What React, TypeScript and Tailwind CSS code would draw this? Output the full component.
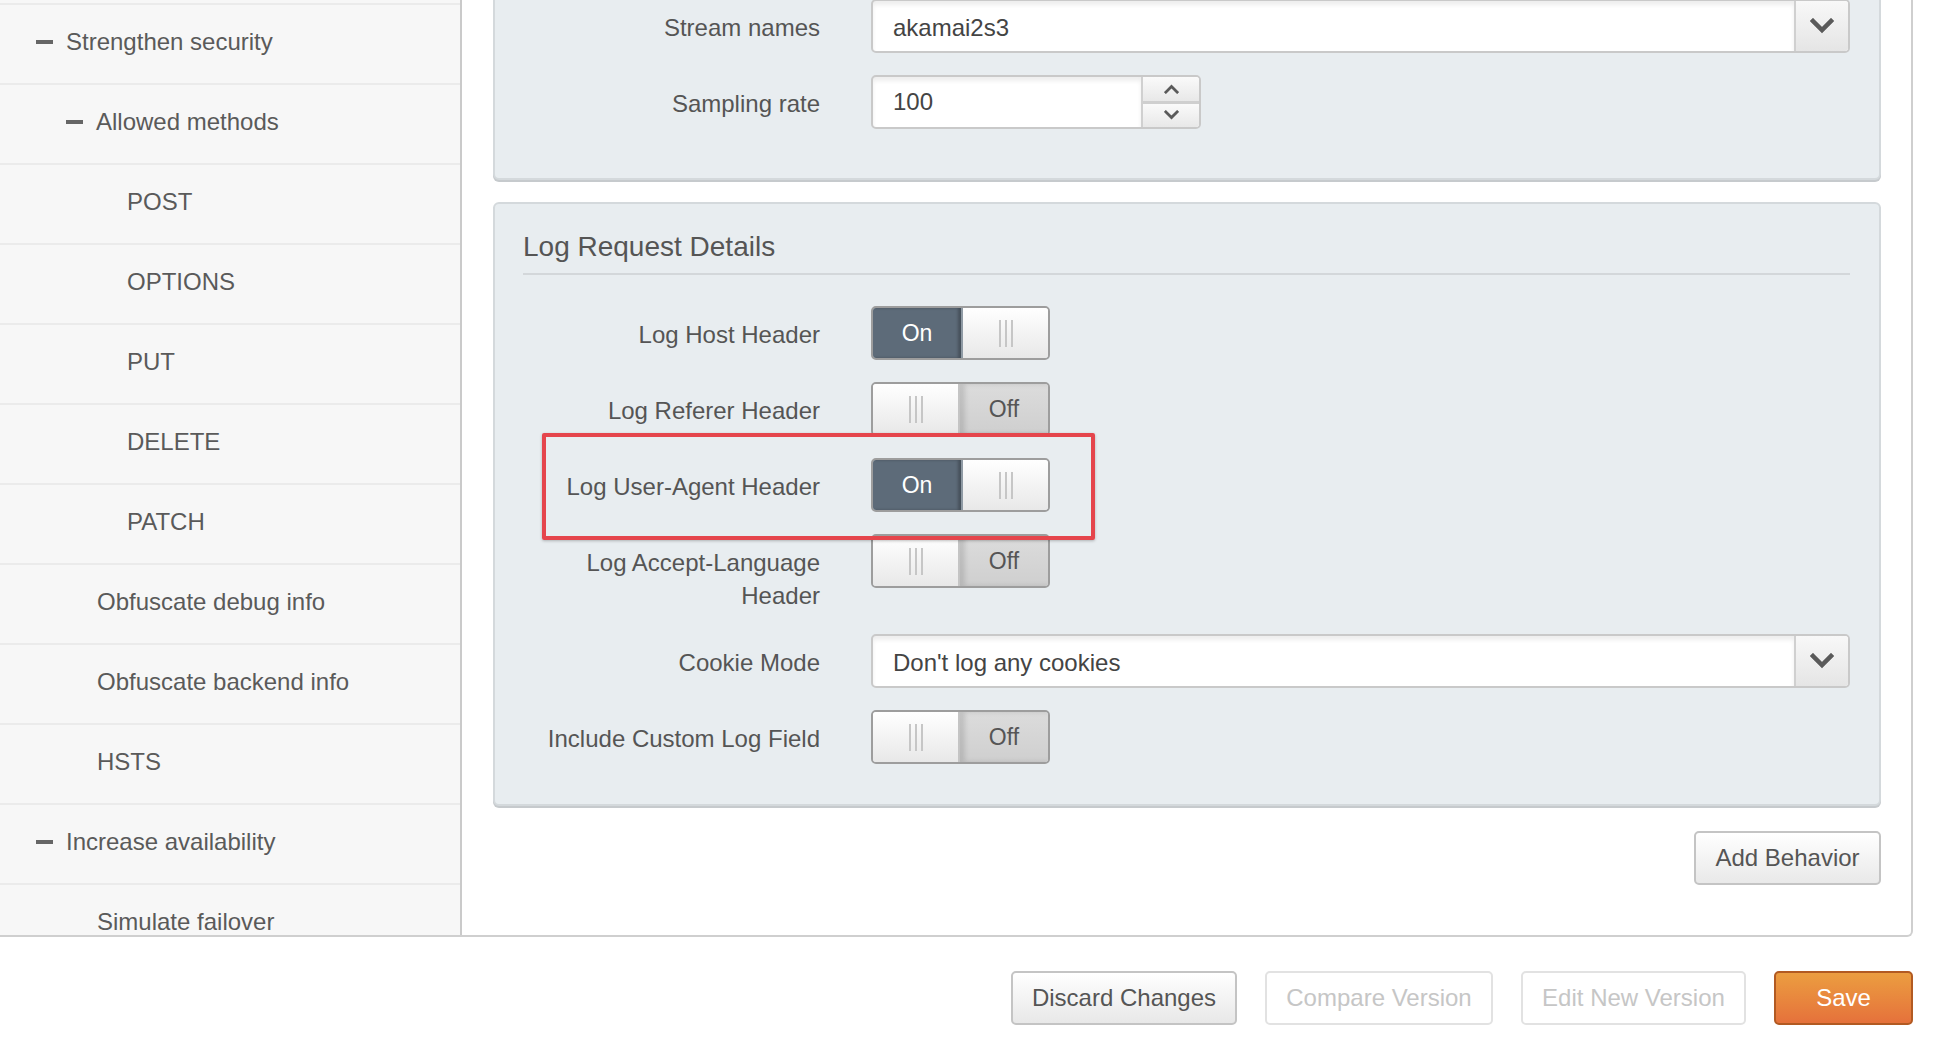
import React from "react";

type NavItem = { label: string; indent: number; dash?: boolean };

const navItems: NavItem[] = [
  { label: "Strengthen security", indent: 36, dash: true },
  { label: "Allowed methods", indent: 66, dash: true },
  { label: "POST", indent: 127 },
  { label: "OPTIONS", indent: 127 },
  { label: "PUT", indent: 127 },
  { label: "DELETE", indent: 127 },
  { label: "PATCH", indent: 127 },
  { label: "Obfuscate debug info", indent: 97 },
  { label: "Obfuscate backend info", indent: 97 },
  { label: "HSTS", indent: 97 },
  { label: "Increase availability", indent: 36, dash: true },
  { label: "Simulate failover", indent: 97 },
];

function Chevron({ up = false, className = "" }: { up?: boolean; className?: string }) {
  return (
    <svg viewBox="0 0 24 16" className={className} fill="none">
      <path
        d={up ? "M3 13 L12 4 L21 13" : "M3 3 L12 12 L21 3"}
        stroke="#5a5a5a"
        strokeWidth="4.5"
        strokeLinecap="square"
      />
    </svg>
  );
}

function Knob({ side }: { side: "left" | "right" }) {
  return (
    <div
      className={`flex-1 flex items-center justify-center gap-[4px] bg-gradient-to-b from-white to-[#e8e8e8] ${
        side === "right" ? "border-l-2 border-[#8f9aa4]" : "border-r-2 border-[#c4c4c4]"
      }`}
    >
      <span className="w-[2px] h-[27px] bg-[#c6c6c6]" />
      <span className="w-[2px] h-[27px] bg-[#c6c6c6]" />
      <span className="w-[2px] h-[27px] bg-[#c6c6c6]" />
    </div>
  );
}

function Toggle({ on }: { on: boolean }) {
  return (
    <div className="flex w-[179px] h-[54px] shrink-0 rounded-[5px] border-2 border-[#9d9d9d] overflow-hidden text-[23px]">
      {on ? (
        <>
          <div className="w-[88px] flex items-center justify-center bg-[#5d6b79] text-white shadow-[inset_-3px_0_3px_rgba(0,0,0,0.25)]">
            On
          </div>
          <Knob side="right" />
        </>
      ) : (
        <>
          <Knob side="left" />
          <div className="w-[88px] flex items-center justify-center bg-gradient-to-b from-[#dcdcdc] to-[#cfcfcf] text-[#555] shadow-[inset_5px_0_5px_rgba(0,0,0,0.12)]">
            Off
          </div>
        </>
      )}
    </div>
  );
}

function Select({ value }: { value: string }) {
  return (
    <div className="flex-1 flex h-[54px] rounded-[5px] border-2 border-[#c9c9c9] bg-white overflow-hidden">
      <div className="flex-1 flex items-center pl-[20px] pt-[3px] text-[24px] text-[#444] shadow-[inset_0_4px_4px_rgba(0,0,0,0.07)]">
        {value}
      </div>
      <div className="w-[54px] flex items-center justify-center border-l-2 border-[#d0d0d0] bg-gradient-to-b from-[#f8f8f8] to-[#e5e5e5]">
        <Chevron className="w-[24px] h-[16px]" />
      </div>
    </div>
  );
}

function Spinner({ value }: { value: string }) {
  return (
    <div className="flex w-[330px] h-[54px] rounded-[5px] border-2 border-[#c9c9c9] bg-white overflow-hidden">
      <div className="flex-1 flex items-center pl-[20px] text-[24px] text-[#444] shadow-[inset_0_4px_4px_rgba(0,0,0,0.07)]">
        {value}
      </div>
      <div className="w-[58px] flex flex-col border-l-2 border-[#d0d0d0]">
        <div className="flex-1 flex items-center justify-center bg-gradient-to-b from-[#fafafa] to-[#e8e8e8]">
          <Chevron up className="w-[15px] h-[10px]" />
        </div>
        <div className="h-[3px] bg-[#cfcfcf]" />
        <div className="flex-1 flex items-center justify-center bg-gradient-to-b from-[#fafafa] to-[#e8e8e8]">
          <Chevron className="w-[15px] h-[10px]" />
        </div>
      </div>
    </div>
  );
}

function Row({ label, children }: { label: string; children: React.ReactNode }) {
  return (
    <div className="flex items-start gap-[51px]">
      <div className="w-[297px] shrink-0 pt-[12px] text-right text-[24px] leading-[33px] text-[#555]">
        {label}
      </div>
      {children}
    </div>
  );
}

export default function App() {
  return (
    <div className="w-[1946px] h-[1056px] overflow-hidden bg-white font-['Liberation_Sans',Arial,sans-serif] text-[#555]">
      <div className="flex h-[937px] w-[1913px] border-r-2 border-b-2 border-[#cfcfcf] rounded-br-[6px] overflow-hidden">
        {/* tree */}
        <aside className="w-[462px] shrink-0 bg-[#f7f7f7] border-r-2 border-[#cacaca] overflow-hidden">
          <div className="h-[5px] border-b-2 border-[#ebebeb]" />
          {navItems.map((item) => (
            <div
              key={item.label}
              className="h-[80px] flex items-center pb-[4px] border-b-2 border-[#ebebeb] text-[24px] text-[#5a5a5a]"
              style={{ paddingLeft: item.indent }}
            >
              {item.dash && <span className="w-[17px] h-[4px] bg-[#666] mr-[13px] shrink-0" />}
              {item.label}
            </div>
          ))}
        </aside>

        {/* behavior editor */}
        <main className="flex-1 flex flex-col pl-[31px] pr-[30px]">
          <section className="-mt-[40px] rounded-[6px] border-2 border-[#d4d9dc] bg-[#e8edf0] pt-[37px] pb-[49px] pl-[28px] pr-[29px] shadow-[0_2px_0_#c6cacd] flex flex-col gap-[22px]">
            <Row label="Stream names">
              <Select value="akamai2s3" />
            </Row>
            <Row label="Sampling rate">
              <Spinner value="100" />
            </Row>
          </section>

          <section className="mt-[22px] rounded-[6px] border-2 border-[#d4d9dc] bg-[#e8edf0] pt-[26px] pb-[40px] pl-[28px] pr-[29px] shadow-[0_2px_0_#c6cacd]">
            <h2 className="text-[28px] leading-[34px] pb-[9px] border-b-2 border-[#d3d7da] text-[#555]">
              Log Request Details
            </h2>
            <div className="mt-[31px] flex flex-col gap-[22px]">
              <Row label="Log Host Header">
                <Toggle on />
              </Row>
              <Row label="Log Referer Header">
                <Toggle on={false} />
              </Row>
              <div className="relative">
                <Row label="Log User-Agent Header">
                  <Toggle on />
                </Row>
                <div className="absolute left-[19px] -top-[25px] w-[553px] h-[107px] border-[4px] border-[#e5454c] rounded-[2px] shadow-[0_1px_3px_rgba(0,0,0,0.25)] pointer-events-none" />
              </div>
              <Row label="Log Accept-Language Header">
                <Toggle on={false} />
              </Row>
              <Row label="Cookie Mode">
                <Select value="Don't log any cookies" />
              </Row>
              <Row label="Include Custom Log Field">
                <Toggle on={false} />
              </Row>
            </div>
          </section>

          <div className="mt-[25px] flex justify-end">
            <button className="w-[187px] h-[54px] rounded-[5px] border-2 border-[#c4c4c4] bg-gradient-to-b from-white to-[#e9e9e9] text-[24px] text-[#555]">
              Add Behavior
            </button>
          </div>
        </main>
      </div>

      {/* footer actions */}
      <div className="mt-[34px] pr-[33px] flex justify-end gap-[28px] text-[24px]">
        <button className="w-[226px] h-[54px] rounded-[5px] border-2 border-[#c4c4c4] bg-gradient-to-b from-white to-[#e8e8e8] text-[#555]">
          Discard Changes
        </button>
        <button className="w-[228px] h-[54px] rounded-[5px] border-2 border-[#e2e2e2] bg-white text-[#c6c6c6]">
          Compare Version
        </button>
        <button className="w-[225px] h-[54px] rounded-[5px] border-2 border-[#e2e2e2] bg-white text-[#c6c6c6]">
          Edit New Version
        </button>
        <button className="w-[139px] h-[54px] rounded-[5px] border-2 border-[#b25a22] bg-gradient-to-b from-[#eb9d40] to-[#e5713b] text-white">
          Save
        </button>
      </div>
    </div>
  );
}
